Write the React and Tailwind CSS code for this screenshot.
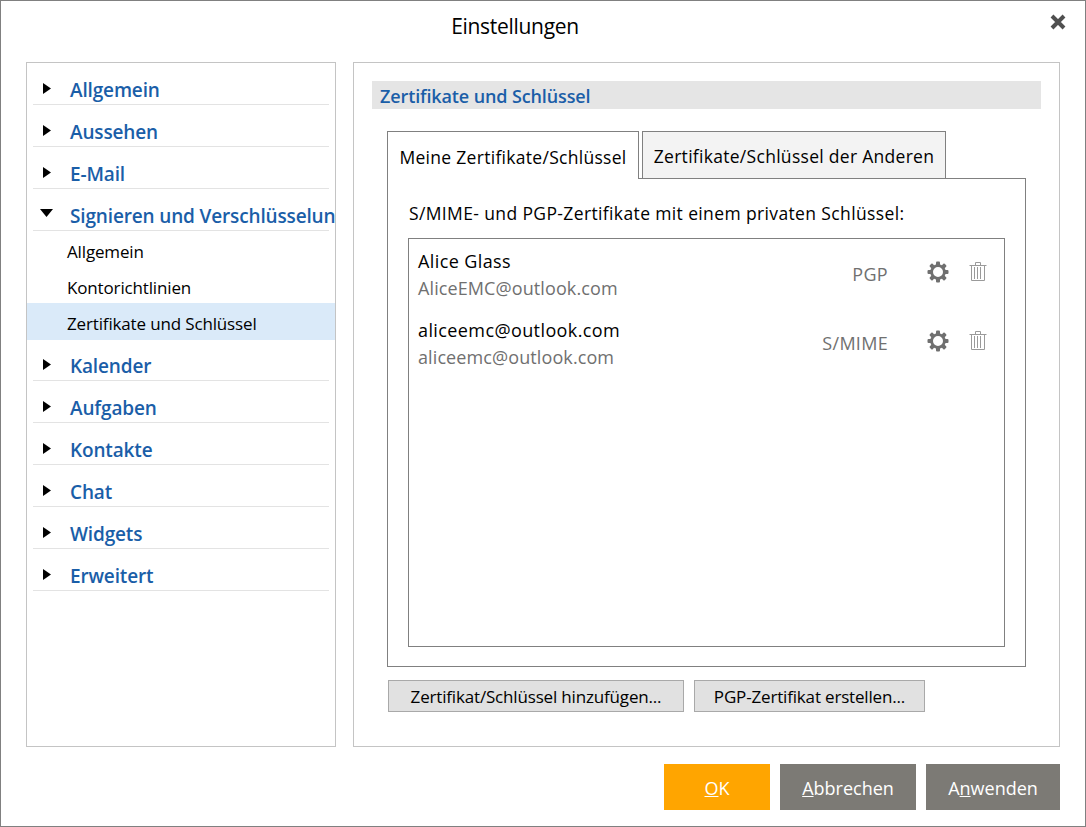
const font = { fontFamily: '"Open Sans", sans-serif' };

const sections = [
  { label: "Allgemein" },
  { label: "Aussehen" },
  { label: "E-Mail" },
  {
    label: "Signieren und Verschlüsselung",
    open: true,
    children: ["Allgemein", "Kontorichtlinien", "Zertifikate und Schlüssel"],
  },
  { label: "Kalender" },
  { label: "Aufgaben" },
  { label: "Kontakte" },
  { label: "Chat" },
  { label: "Widgets" },
  { label: "Erweitert" },
];

const certs = [
  { name: "Alice Glass", mail: "AliceEMC@outlook.com", type: "PGP" },
  { name: "aliceemc@outlook.com", mail: "aliceemc@outlook.com", type: "S/MIME" },
];

function Arrow({ open }) {
  if (open) {
    return (
      <svg width="13" height="8" viewBox="0 0 13 8" className="absolute left-[7px] top-[12px]">
        <path d="M0 0H13L6.5 8Z" fill="#000" />
      </svg>
    );
  }
  return (
    <svg width="8" height="11" viewBox="0 0 8 11" className="absolute left-[10px] top-[12px]">
      <path d="M0 0L8 5.5L0 11Z" fill="#000" />
    </svg>
  );
}

function Gear() {
  const teeth = [0, 45, 90, 135, 180, 225, 270, 315];
  return (
    <svg width="22" height="22" viewBox="0 0 22 22">
      {teeth.map((a) => (
        <rect key={a} x="9" y="0.5" width="4" height="4.5" rx="1" fill="#707070" transform={`rotate(${a} 11 11)`} />
      ))}
      <circle cx="11" cy="11" r="6.4" fill="none" stroke="#707070" strokeWidth="2.8" />
    </svg>
  );
}

function Trash() {
  return (
    <svg width="18" height="19" viewBox="0 0 18 19" fill="none" stroke="#9a9a9a" strokeWidth="1">
      <path d="M0.5 3.5H17.5M6.5 3.5V0.5H11.5V3.5M2.5 3.5V18.5H15.5V3.5M5.5 5V17M8.5 5V17M11.5 5V17" />
    </svg>
  );
}

function Btn({ children, className }) {
  return <div className={`flex items-center justify-center ${className}`}>{children}</div>;
}

export default function App() {
  return (
    <div
      style={font}
      className="flex h-[827px] w-[1086px] flex-col border border-[#808080] bg-white text-black"
    >
      <div className="relative flex h-[61px] shrink-0 justify-center pr-[56px] pt-[11px]">
        <span className="text-[21px] leading-[28px] tracking-[-0.3px]">Einstellungen</span>
        <svg width="16" height="16" viewBox="0 0 16 16" className="absolute left-[1049px] top-[13px]">
          <path d="M2 2L14 14M14 2L2 14" stroke="#505050" strokeWidth="4" />
        </svg>
      </div>

      <div className="flex h-[685px] shrink-0 gap-[17px] pl-[25px]">
        <div className="w-[310px] overflow-hidden border border-[#c4c4c4] pt-[8px]">
          {sections.map((s) => (
            <div key={s.label}>
              <div className={`relative mx-[6px] h-[34px] border-b border-[#e3e3e3] ${s.open ? "" : "mb-[8px]"}`}>
                <Arrow open={s.open} />
                <span className="absolute left-[37px] top-[5px] whitespace-nowrap text-[19px] font-semibold leading-[28px] tracking-[-0.15px] text-[#1a5ea8]">
                  {s.label}
                </span>
              </div>
              {s.children && (
                <div className="mb-[7px]">
                  {s.children.map((c, i) => (
                    <div
                      key={c}
                      className={`flex items-center pl-[40px] pt-[5px] text-[17px] tracking-[-0.15px] ${
                        i === 2 ? "h-[37px] bg-[#daeaf9]" : "h-[36px]"
                      }`}
                    >
                      {c}
                    </div>
                  ))}
                </div>
              )}
            </div>
          ))}
        </div>

        <div className="flex w-[707px] flex-col border border-[#c4c4c4] pl-[18px] pt-[18px]">
          <div className="flex h-[28px] w-[669px] items-center bg-[#e5e5e5] pl-[8px] pt-[2px] text-[18px] font-semibold tracking-[-0.12px] text-[#1a5ea8]">
            Zertifikate und Schlüssel
          </div>

          <div className="relative z-10 ml-[15px] mt-[22px] flex h-[48px] items-start gap-[3px] pt-0 text-[17.5px] tracking-[0.29px]">
            <div className="flex h-[48px] w-[252px] items-center justify-center border border-b-0 border-[#808080] bg-white pt-[3px]">
              Meine Zertifikate/Schlüssel
            </div>
            <div className="flex h-[47px] w-[304px] items-center justify-center border border-b-0 border-[#808080] bg-[#f3f3f3] pt-[3px]">
              Zertifikate/Schlüssel der Anderen
            </div>
          </div>

          <div className="-mt-px ml-[15px] flex h-[489px] w-[639px] flex-col border border-[#808080] px-[20px] pt-[22px]">
            <div className="h-[37px] pl-[1px] text-[17.5px] leading-[24px] tracking-[0.37px]">
              S/MIME- und PGP-Zertifikate mit einem privaten Schlüssel:
            </div>
            <div className="h-[409px] w-[597px] border border-[#808080] pl-[9px] pr-[17px] pt-[8px]">
              {certs.map((c) => (
                <div key={c.type} className="flex h-[69px] items-start">
                  <div className="flex-1">
                    <div className="text-[18px] leading-[28px] tracking-[0.4px]">{c.name}</div>
                    <div className="text-[18px] leading-[26px] tracking-[0.1px] text-[#707070]">{c.mail}</div>
                  </div>
                  <div className="mt-[14px] text-[18px] tracking-[0.3px] text-[#707070]">{c.type}</div>
                  <div className="ml-[39px] mt-[14px]"><Gear /></div>
                  <div className="ml-[20px] mt-[15px]"><Trash /></div>
                </div>
              ))}
            </div>
          </div>

          <div className="ml-[16px] mt-[13px] flex gap-[10px] text-[17px] tracking-[-0.17px]">
            <Btn className="h-[32px] w-[296px] border border-[#a9a9a9] bg-[#e1e1e1] pt-[1px]">Zertifikat/Schlüssel hinzufügen...</Btn>
            <Btn className="h-[32px] w-[231px] border border-[#a9a9a9] bg-[#e1e1e1] pt-[1px]">PGP-Zertifikat erstellen...</Btn>
          </div>
        </div>
      </div>

      <div className="mt-[17px] flex justify-end gap-[10px] pr-[25px] text-[18px] text-white">
        <Btn className="h-[46px] w-[106px] bg-[#ffa500] pt-[2px]"><span><u>O</u>K</span></Btn>
        <Btn className="h-[46px] w-[136px] bg-[#7c7a75] pt-[2px]"><span><u>A</u>bbrechen</span></Btn>
        <Btn className="h-[46px] w-[134px] bg-[#7c7a75] pt-[2px]"><span>A<u>n</u>wenden</span></Btn>
      </div>
    </div>
  );
}
